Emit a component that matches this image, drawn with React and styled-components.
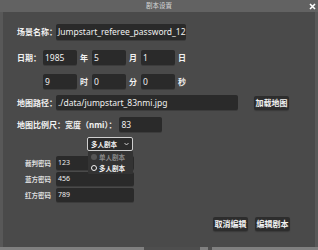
import React from "react";
import styled, { createGlobalStyle } from "styled-components";

const Global = createGlobalStyle`
  html, body { margin: 0; padding: 0; background: #5a5a5a; overflow: hidden; }
  * { box-sizing: border-box; }
`;

const FONT = `"Noto Sans", "Noto Sans CJK SC", sans-serif`;

const Window = styled.div`
  width: 318px;
  height: 250px;
  display: flex;
  flex-direction: column;
  background: #585858;
  font-family: ${FONT};
  color: #f2f2f2;
`;

const TitleBar = styled.div`
  height: 12px;
  display: grid;
  grid-template-columns: 1fr auto 1fr;
  align-items: center;
  background: #626262;
`;

const Title = styled.div`
  grid-column: 2;
  font-size: 6.5px;
  line-height: 12px;
  color: #d8d8d8;
`;

const Close = styled.div`
  grid-column: 3;
  justify-self: end;
  margin-right: 2px;
  width: 8px;
  height: 8px;
  display: flex;
  align-items: center;
  justify-content: center;
`;

const Body = styled.div`
  flex: 1;
  margin: 0 3px;
  background: #4a4a4a;
  padding-left: 14px;
  display: flex;
  flex-direction: column;
`;

const Row = styled.div`
  display: flex;
  align-items: center;
  margin-top: ${(p) => p.$mt}px;
  padding-left: ${(p) => p.$pl || 0}px;
  justify-content: ${(p) => p.$justify || "flex-start"};
  padding-right: ${(p) => p.$pr || 0}px;
  position: relative;
`;

const Label = styled.div`
  font-size: 8px;
  font-weight: 700;
  line-height: 10px;
  white-space: nowrap;
  width: ${(p) => (p.$w ? `${p.$w}px` : "auto")};
  margin-right: ${(p) => p.$mr || 0}px;
`;

const SmallLabel = styled.div`
  font-size: 6.5px;
  font-weight: 700;
  color: #dcdcdc;
  width: 31px;
  white-space: nowrap;
`;

const Input = styled.div`
  width: ${(p) => p.$w}px;
  height: ${(p) => p.$h || 15}px;
  background: #2a2a2a;
  border-radius: 2px;
  box-shadow: 0 1px 0 #3c3c3c;
  padding-left: 2px;
  font-size: ${(p) => p.$fs || 8.5}px;
  line-height: ${(p) => p.$h || 15}px;
  color: #f0f0f0;
  white-space: nowrap;
  overflow: hidden;
`;

const Unit = styled.div`
  width: ${(p) => p.$w}px;
  padding-left: 3px;
  font-size: 8px;
  font-weight: 700;
  line-height: 10px;
`;

const Button = styled.div`
  width: 35px;
  height: 14px;
  background: #2d2d2d;
  border-radius: 2px;
  box-shadow: 0 1px 1px #3a3a3a;
  font-size: 8px;
  font-weight: 700;
  line-height: 14px;
  text-align: center;
  color: #f2f2f2;
  margin-left: ${(p) => p.$ml || 0}px;
`;

const Select = styled.div`
  position: relative;
  width: 46px;
  height: 14px;
  background: #2b2b2b;
  border: 1px solid #cfcfcf;
  border-radius: 2px;
  display: flex;
  align-items: center;
  padding-left: 3px;
  font-size: 6.5px;
  font-weight: 700;
  color: #f4f4f4;
`;

const Chevron = styled.svg`
  margin-left: auto;
  margin-right: 3px;
`;

const Popup = styled.div`
  position: absolute;
  top: 13px;
  left: 0px;
  width: 45px;
  height: 23px;
  background: #333333;
  border-radius: 1px;
  display: flex;
  flex-direction: column;
  justify-content: center;
  gap: 2px;
  padding-left: 3px;
  z-index: 2;
`;

const Option = styled.div`
  display: flex;
  align-items: center;
  gap: 2px;
  font-size: 6.5px;
  font-weight: 700;
  line-height: 9px;
  color: ${(p) => (p.$active ? "#f4f4f4" : "#8a8a8a")};
`;

const Radio = styled.span`
  width: 6px;
  height: 6px;
  border-radius: 50%;
  background: ${(p) => (p.$checked ? "#2a2a2a" : "#555555")};
  border: ${(p) => (p.$checked ? "1.5px solid #f4f4f4" : "none")};
`;

const BottomStrip = styled.div`
  height: 3px;
  background: #808080;
  display: flex;
`;

const StripDark = styled.div`
  margin-left: ${(p) => p.$ml}px;
  width: ${(p) => p.$w}px;
  background: #4e4e4e;
`;

export default function App() {
  return (
    <>
      <Global />
      <Window>
        <TitleBar>
          <Title>剧本设置</Title>
          <Close>
            <svg width="7" height="7" viewBox="0 0 7 7">
              <path d="M1 1L6 6M6 1L1 6" stroke="#ffffff" strokeWidth="1.6" />
            </svg>
          </Close>
        </TitleBar>
        <Body>
          <Row $mt={12}>
            <Label $w={39}>场景名称：</Label>
            <Input $w={130} $h={16}>Jumpstart_referee_password_12</Input>
          </Row>
          <Row $mt={10}>
            <Label $w={26}>日期：</Label>
            <Input $w={34}>1985</Input>
            <Unit $w={15}>年</Unit>
            <Input $w={34}>5</Input>
            <Unit $w={15}>月</Unit>
            <Input $w={34}>1</Input>
            <Unit $w={15}>日</Unit>
          </Row>
          <Row $mt={9}>
            <Label $w={26} />
            <Input $w={34}>9</Input>
            <Unit $w={15}>时</Unit>
            <Input $w={34}>0</Input>
            <Unit $w={15}>分</Unit>
            <Input $w={34}>0</Input>
            <Unit $w={15}>秒</Unit>
          </Row>
          <Row $mt={6}>
            <Label $w={39}>地图路径：</Label>
            <Input $w={182}>./data/jumpstart_83nmi.jpg</Input>
            <Button $ml={16}>加载地图</Button>
          </Row>
          <Row $mt={7}>
            <Label $mr={3}>地图比例尺：宽度（nmi）：</Label>
            <Input $w={43}>83</Input>
          </Row>
          <Row $mt={5} $pl={70}>
            <Select>
              多人剧本
              <Chevron width="5" height="4" viewBox="0 0 5 4">
                <path d="M0.5 1L2.5 3L4.5 1" stroke="#e0e0e0" strokeWidth="0.9" fill="none" />
              </Chevron>
              <Popup>
                <Option>
                  <Radio />
                  单人剧本
                </Option>
                <Option $active>
                  <Radio $checked />
                  多人剧本
                </Option>
              </Popup>
            </Select>
          </Row>
          <Row $mt={5} $pl={8}>
            <SmallLabel>裁判密码</SmallLabel>
            <Input $w={78} $h={14} $fs={7}>123</Input>
          </Row>
          <Row $mt={2} $pl={8}>
            <SmallLabel>蓝方密码</SmallLabel>
            <Input $w={78} $h={14} $fs={7}>456</Input>
          </Row>
          <Row $mt={2} $pl={8}>
            <SmallLabel>红方密码</SmallLabel>
            <Input $w={78} $h={14} $fs={7}>789</Input>
          </Row>
          <Row $mt={15} $justify="flex-end" $pr={25}>
            <Button>取消编辑</Button>
            <Button $ml={7}>编辑剧本</Button>
          </Row>
        </Body>
        <BottomStrip>
          <StripDark $ml={144} $w={56} />
          <StripDark $ml={8} $w={4} />
        </BottomStrip>
      </Window>
    </>
  );
}
